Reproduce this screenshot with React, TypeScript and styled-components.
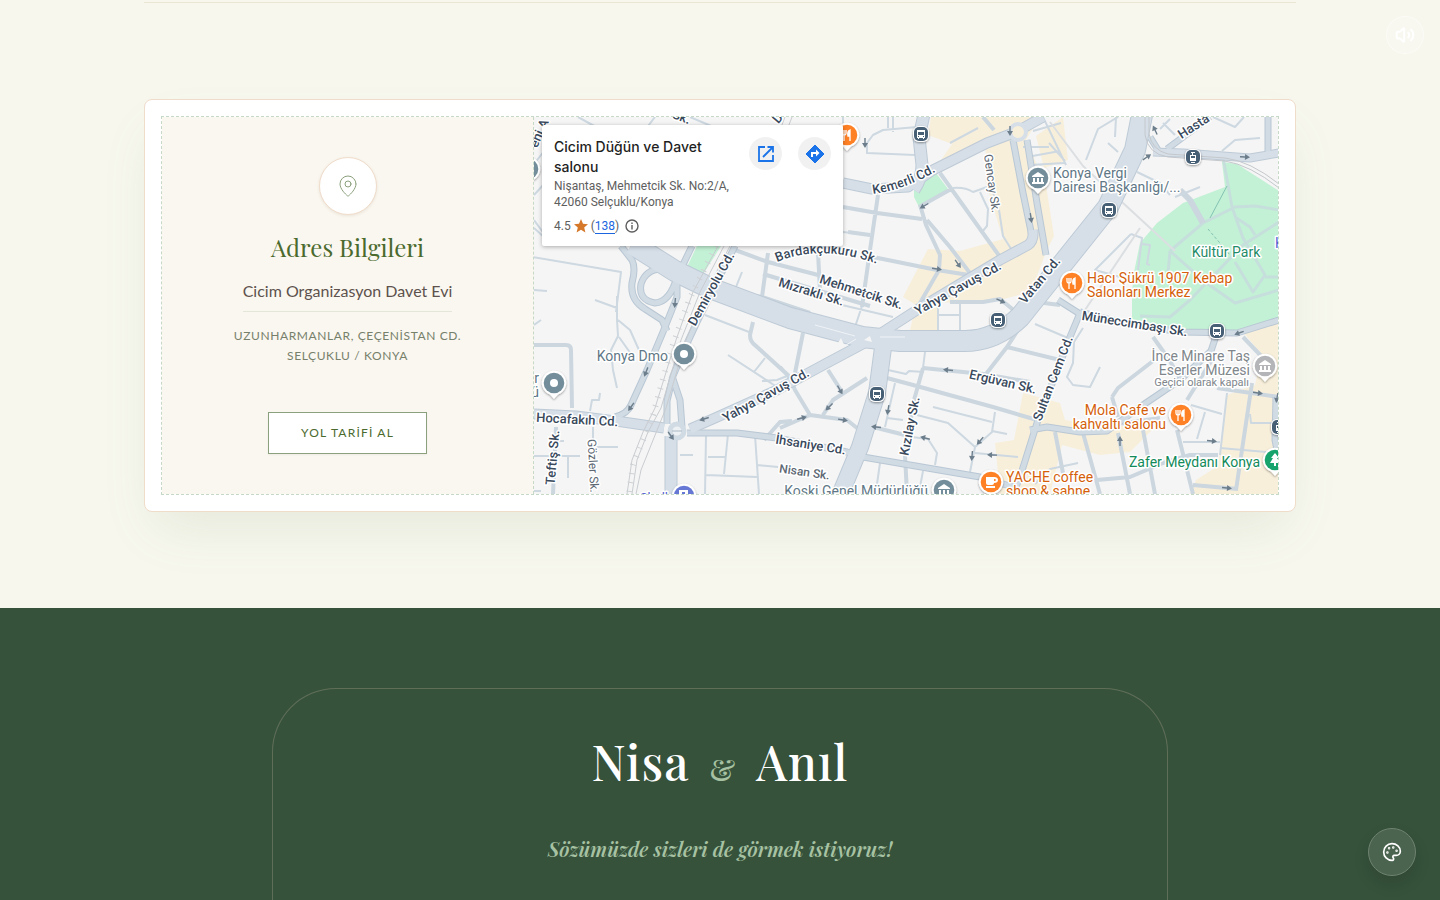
import React from "react";
import styled, { createGlobalStyle } from "styled-components";
import { MapPin, Palette, Volume2 } from "lucide-react";

const sans = `Lato, "Liberation Sans", sans-serif`;
const serif = `"Playfair Display", "Liberation Serif", serif`;

const GlobalStyle = createGlobalStyle`
  * { box-sizing: border-box; }
  body { margin: 0; font-family: ${sans}; background: #f7f7ee; overflow: hidden; }
  h2, h3, p { margin: 0; font-weight: 400; }
`;

const Page = styled.div`
  display: flex;
  flex-direction: column;
  height: 100vh;
  overflow: hidden;
`;

const VenueSection = styled.section`
  flex: none;
  padding: 2px 24px 96px;
`;

const Container = styled.div`
  max-width: 1152px;
  margin: 0 auto;
  padding-top: 96px;
  border-top: 1px solid #e9e6d3;
`;

const Card = styled.div`
  padding: 16px;
  background: #fff;
  border: 1px solid #f0dcca;
  border-radius: 8px;
  box-shadow: 0 25px 50px -12px rgba(120, 148, 100, 0.14);
`;

const CardInner = styled.div`
  display: grid;
  grid-template-columns: 1fr 2fr;
  border: 1px dashed #c6d9c6;
`;

const Address = styled.div`
  display: flex;
  flex-direction: column;
  align-items: center;
  padding: 40px 32px;
  text-align: center;
  background: #faf7f0;
  border-right: 1px dashed #c6d9c6;
`;

const PinBadge = styled.span`
  display: flex;
  align-items: center;
  justify-content: center;
  width: 58px;
  height: 58px;
  margin-bottom: 16px;
  color: #8ba07c;
  background: #fff;
  border: 1px solid #f0dcca;
  border-radius: 50%;
  box-shadow: 0 1px 3px rgba(120, 90, 50, 0.12);
`;

const AddressTitle = styled.h3`
  font: 400 24px/32px ${serif};
  color: #4b6a2e;
  margin-bottom: 16px;
`;

const VenueName = styled.p`
  font-size: 16px;
  line-height: 24px;
  color: #5d524d;
  padding-bottom: 8px;
  margin-bottom: 14px;
  border-bottom: 1px solid #e4e6da;
`;

const Street = styled.p`
  font-size: 12px;
  line-height: 20px;
  letter-spacing: 0.05em;
  color: #77806b;
  margin-bottom: 46px;
`;

const RouteButton = styled.button`
  height: 42px;
  padding: 0 32px;
  font: 400 12px/16px ${sans};
  letter-spacing: 0.1em;
  color: #4b6a2e;
  background: #fff;
  border: 1px solid #8ba07c;
  box-shadow: 0 1px 2px rgba(0, 0, 0, 0.05);
  cursor: pointer;
`;

const MapPane = styled.div`
  position: relative;
  min-width: 0;
  overflow: hidden;
  background: #f5f5f5;
`;

const MapDrawing = styled.svg`
  position: absolute;
  inset: 0;
  width: 100%;
  height: 100%;
`;

const PlaceCard = styled.div`
  position: absolute;
  top: 8px;
  left: 8px;
  display: flex;
  gap: 16px;
  width: 301px;
  height: 121px;
  padding: 12px;
  background: #fff;
  border-radius: 2px;
  box-shadow: 0 1px 4px rgba(0, 0, 0, 0.3);
  font-family: Inter, sans-serif;
`;

const PlaceInfo = styled.div`
  flex: 1;
  min-width: 0;
  color: #5e5e5e;
  font-size: 12px;
  line-height: 16px;
  white-space: nowrap;
`;

const PlaceName = styled.h3`
  font-size: 14px;
  line-height: 20px;
  font-weight: 500;
  color: #1f1f1f;
  margin-bottom: 1px;
`;

const PlaceAddress = styled.p`
  font-family: Roboto, sans-serif;
`;

const Rating = styled.div`
  display: flex;
  align-items: center;
  gap: 3px;
  margin-top: 8px;
  font-family: Roboto, sans-serif;
  svg { flex: none; }
`;

const Reviews = styled.a`
  color: #1a66e0;
  text-decoration: none;
  border-bottom: 1px solid #1a66e0;
`;

const RoundLink = styled.a`
  flex: none;
  display: flex;
  align-items: center;
  justify-content: center;
  width: 33px;
  height: 33px;
  border-radius: 50%;
  background: #f1f1f1;
`;

const Closing = styled.footer`
  flex: 1;
  display: flex;
  justify-content: center;
  min-height: 292px;
  padding: 80px 24px 0;
  background: #36523b;
`;

const Arch = styled.div`
  width: 100%;
  max-width: 896px;
  padding: 40px 24px 0;
  text-align: center;
  border: 1px solid rgba(214, 190, 170, 0.26);
  border-bottom: 0;
  border-radius: 64px 64px 0 0;
`;

const Names = styled.h2`
  display: flex;
  justify-content: center;
  align-items: baseline;
  gap: 20px;
  font: 500 48px/64px ${serif};
  letter-spacing: 1px;
  color: #fff;
  margin-bottom: 32px;
`;

const Ampersand = styled.span`
  font-size: 30px;
  color: #a7c2a3;
`;

const Invite = styled.p`
  font: italic 600 20px/32px ${serif};
  color: #a7c2a3;
`;

const SoundButton = styled.button`
  position: fixed;
  top: 16px;
  right: 16px;
  display: flex;
  align-items: center;
  justify-content: center;
  width: 38px;
  height: 38px;
  padding: 0;
  color: #fff;
  background: rgba(255, 255, 255, 0.12);
  border: 1px solid rgba(255, 255, 255, 0.5);
  border-radius: 50%;
`;

const ThemeButton = styled.button`
  position: fixed;
  right: 24px;
  bottom: 24px;
  display: flex;
  align-items: center;
  justify-content: center;
  width: 48px;
  height: 48px;
  padding: 0;
  color: #fff;
  background: #4b644f;
  border: 1px solid #6e8371;
  border-radius: 50%;
  box-shadow: 0 8px 16px rgba(0, 0, 0, 0.12);
`;

const parks = [
  "M1222 162L1237 164L1262 180L1279 191V318L1243 332L1190 333L1132 321L1132 300L1133 277L1140 243L1157 223L1183 203L1225 187Z",
  "M914 189L936 173L948 189L919 207L914 197Z",
  "M697 246L721 246L700 279L685 271Z",
];

const districts = [
  "M931 117H1040L1026 140L1046 185L1054 236L1046 252L1031 292L1000 300L975 304L940 302L937 331L910 330L916 305L903 297L928 249L960 251L1003 239L985 180L986 141L941 160L952 144L928 135Z",
  "M1036 136L1063 117L1068 160L1044 168Z",
  "M1023 393L1060 403L1065 420L1110 427L1160 422L1130 452L1100 455L1062 445L1050 494H1000L995 443L1014 440Z",
  "M1243 332L1279 320V494H1190L1196 480L1218 466L1227 395L1255 385L1262 355Z",
];

const minorRoads = [
  "M578 117L598 128M655 117L645 130M690 117L716 128M534 164L545 150M534 195L545 183M534 220L545 235M534 228L545 238",
  "M533 257L621 272L616 312M595 300L617 308M533 290L547 291M742 272L734 292M534 325L541 320",
  "M617 296V320L618 336L611 350L613 370L617 388M618 320L630 330L639 350M619 337L631 354",
  "M590 411L592 400H599L600 393M593 427V440M533 456H580M596 447H618M568 457V478M556 441H564M533 491H541",
  "M680 455H693M706 435L705 494M728 434L724 474M706 475L757 477M708 457H725M755 435L759 494M757 465L778 467",
  "M705 315L749 332M728 355L777 387M765 358L754 372M762 381L777 380L787 376",
  "M842 305L893 317M863 303L855 327M938 305V330M960 304V331M938 315H960",
  "M925 352L923 368M888 370L906 374L909 371L924 372M895 383L885 427M887 418L903 420M917 415L948 423L975 447L970 472M933 407L992 422M995 412L992 432L975 447M992 431L1007 434M975 453L1018 457M880 463L877 484M923 471L920 487",
  "M903 436L928 439L937 453L935 465",
  "M843 144V117M867 154L867 143L873 135L883 130L917 127M867 153L915 155M893 117V132M888 117V128M950 143L978 128M843 232L870 235",
  "M953 188Q965 187 973 192L987 187M980 192L988 209L987 226L982 232M987 154L991 187L999 210L1003 236L1013 252",
  "M1023 147H1049M1027 157L1060 151M1030 165L1064 163M1043 117L1066 165M1049 143L1065 161M1033 131L1061 123",
  "M1086 160L1098 129L1118 117M1116 117L1115 137M1163 123L1175 135M1160 129L1170 119M1222 151L1235 140L1260 138M1213 117L1235 127L1244 117M1118 152L1108 143",
  "M1137 172L1160 183L1170 195M1175 197L1200 187M1131 234L1142 238L1138 270M1131 234L1095 270L1131 280M1142 244L1150 245L1147 264L1150 265",
  "M1083 328L1074 342L1073 363L1067 377L1073 385L1090 387L1100 367M1035 324L1075 341M1191 405L1222 414M1205 412L1197 439M1183 442H1220M1227 393L1220 455M1220 448L1279 453M1250 414L1251 423H1279M1035 484L1050 469L1078 463",
];

const streets = [
  "M534 345H566Q571 345 571 350L572 408M556 427L553 494M753 322L750 335Q750 342 756 346L789 376M764 440L780 422L792 421",
  "M763 274L830 294L870 306M768 253L762 297M818 253L820 290M735 250L768 262L822 276",
  "M705 288L762 297L810 313M740 300L790 310",
  "M803 333L795 373M780 367L790 378L795 390L810 415M780 428L810 415L847 420L857 428M823 415L833 400L867 378M828 370L842 392",
  "M923 368L983 374L1030 382M923 368L914 400L905 455L907 494M887 378L913 385L993 407L1037 420M873 427L905 435",
  "M1007 347L986 374M1020 327L1007 347L1060 360",
  "M843 207L877 213L922 219M878 195L870 250L862 307M848 232L870 235M873 257L937 270L969 275M927 220L950 247L973 277M940 173L1000 257M919 207L953 188M920 205L926 225L940 255L939 270L920 303",
  "M950 302H983L1000 299L1016 312M983 117L994 130M1020 300L1060 305",
  "M1153 337L1168 358L1183 383M1112 397L1118 388L1153 361M1187 400L1202 376L1213 358M1243 337L1265 360M1112 397L1118 417",
  "M1055 432L1063 473M1083 433L1100 494M1118 433L1130 494M1143 430L1155 494M1177 430L1182 450L1193 494M1097 480L1130 477L1163 463L1190 455H1218M1193 485L1238 489M1252 383L1236 490M1217 388L1279 397M1118 424L1160 418",
];

const parkPaths =
  "M1223 157L1232 207L1243 238L1265 275L1253 292L1235 262M1170 251L1203 223L1235 207L1255 206L1279 210M1170 251L1205 282L1235 303L1279 290M1170 251L1168 273M1235 217L1250 227L1255 235M1243 245L1279 222M1243 245L1190 300L1170 317L1140 316M1265 277H1279";

const avenues = [
  "M621 246L632 260Q636 268 632 283Q630 300 645 309L662 320L667 331",
  "M692 246L677 277Q670 302 655 303Q638 300 641 284Q646 268 664 269L675 272",
  "M677 277V297L663 332L647 370L631 405Q627 414 615 417",
  "M735 246L724 268L697 322L684 350L673 376L667 401V424",
  "M672 376L680 400L682 427M1080 313L1070 337L1037 423L1020 477L1013 494M1058 300L1080 314",
  "M1030 430L1047 427L1080 432L1107 431L1140 407L1180 380L1211 351L1217 333",
  "M1080 312L1130 325L1183 332L1237 333L1279 320",
  "M687 433L737 433L777 438L847 452L863 457L980 477L1013 487",
  "M1027 140L1037 203L1046 255M1013 140L1023 193L1033 241M1276 397L1275 440L1279 460M1268 117V153M1167 149L1210 117M1150 137L1158 150",
];

const wideRoads = [
  "M534 414L576 416L623 422L664 428",
  "M690 429L715 418L775 391L827 363L872 339L920 308L1000 260L1028 245Q1034 241 1033 230",
  "M843 183L872 189L908 187L933 170L987 143L1016 132L1043 117",
];

const boulevard = "M632 244L675 271L710 288L790 318L862 337L900 341H965Q995 341 1020 317L1052 277L1108 207L1135 150L1143 110";
const southRoad = "M884 340L877 393L860 447L838 500";
const sideRoads = "M925 110L919 137L922 165Q922 178 914 190M671 436V500";
const stationRoad = "M1153 152L1183 153L1250 158L1279 153";

type LabelProps = {
  x: number;
  y: number;
  children: React.ReactNode;
  turn?: number;
  size?: number;
  fill?: string;
  anchor?: "start" | "middle" | "end";
  bold?: boolean;
};

const MapText = styled.text`
  font-family: Roboto, sans-serif;
  paint-order: stroke;
  stroke: #fff;
  stroke-width: 3px;
  stroke-linejoin: round;
`;

const Label = ({ x, y, children, turn = 0, size = 13, fill = "#39495c", anchor = "middle", bold = true }: LabelProps) => (
  <MapText x={x} y={y} fontSize={size} fontWeight={bold ? 500 : 400} fill={fill} textAnchor={anchor}
    transform={turn ? `rotate(${turn} ${x} ${y})` : undefined}>{children}</MapText>
);

const Fork = () => (
  <g fill="none" stroke="#fff" strokeWidth="1.3">
    <path d="M-5 -5V-2Q-5 0 -3 0T-1 -2V-5M-3 -5V6" />
    <path d="M3 6V-5Q0 -4 1 1H3" fill="#fff" />
  </g>
);
const Museum = () => <path d="M-6 -2L0 -6L6 -2V-1H-6ZM-5 0H-3V4H-5ZM-1 0H1V4H-1ZM3 0H5V4H3ZM-6 4H6V6H-6Z" fill="#fff" />;
const Dot = () => <circle r="4" fill="#fff" />;
const Cup = () => <path d="M-5 -5H3Q7 -5 7 -2T3 1Q3 3 1 3H-3Q-5 3 -5 1ZM3 -3V-1Q5 -1 5 -2T3 -3ZM-5 4H4V6H-5Z" fill="#fff" />;
const Tree = () => <path d="M0 -7L4 -2H2L5 3H1V6H-1V3H-5L-2 -2H-4Z" fill="#fff" />;

const Pin = ({ x, y, fill, children }: { x: number; y: number; fill: string; children: React.ReactNode }) => (
  <g transform={`translate(${x} ${y})`} filter="url(#pinShadow)">
    <path d="M0 16L-4 11.5A12.2 12.2 0 1 1 4 11.5Z" fill="#fff" />
    <circle r="10.3" fill={fill} />
    {children}
  </g>
);

const Stop = ({ x, y, tram }: { x: number; y: number; tram?: boolean }) => (
  <g transform={`translate(${x} ${y})`} filter="url(#pinShadow)">
    <rect x="-8" y="-8" width="16" height="16" rx="6" fill="#fff" />
    <rect x="-7" y="-7" width="14" height="14" rx="5" fill="#475f75" />
    {tram
      ? <path d="M-3 -2H3V4H-3ZM-2 -5H2V-4H0V-2H-1V-4H-2ZM-2 5H2V6H-2Z" fill="#fff" />
      : <path d="M-4 -4H4V4H3V5H2V4H-2V5H-3V4H-4Z" fill="#fff" />}
    <path d={tram ? "M-2 -1H2V1H-2Z" : "M-3 -2H3V1H-3ZM-3 2H-2V3H-3ZM2 2H3V3H2Z"} fill="#475f75" />
  </g>
);

const arrows: [number, number, number][] = [
  [865, 143, 90], [924, 206, 150], [1010, 131, 90], [1031, 218, 82], [937, 269, 8], [958, 264, 55], [1001, 301, 25],
  [675, 303, 95], [646, 372, 112], [631, 407, 125], [704, 419, 163], [671, 436, 55], [840, 390, 60], [829, 407, 135],
  [802, 418, -15], [843, 420, 10], [888, 410, 100], [876, 427, 185], [925, 438, 195], [948, 370, 185], [980, 441, 130],
  [972, 456, 95], [992, 455, 182], [1155, 130, 245], [1147, 157, -35], [1245, 157, 3], [1239, 333, 160], [1258, 393, 8],
  [1277, 398, 100], [1120, 441, -90], [1212, 441, 5], [1227, 488, 5],
];

const gray = "#5f7786";
const orange = "#d55f0a";

const VenueMap = () => (
  <MapDrawing viewBox="534 117 744 377" preserveAspectRatio="xMidYMid slice" role="img" aria-label="Selçuklu, Konya">
    <defs>
      <filter id="pinShadow" x="-40%" y="-40%" width="180%" height="180%">
        <feDropShadow dx="0" dy="1" stdDeviation="1" floodOpacity="0.4" />
      </filter>
      <path id="kemerli" d="M873 194Q905 190 940 169" />
      <path id="bardakcu" d="M777 262Q822 243 880 265" />
    </defs>
    {districts.map((d) => <path key={d} d={d} fill="#f8efdb" />)}
    {parks.map((d) => <path key={d} d={d} fill="#c3f1d5" />)}
    <g fill="none" strokeLinejoin="round">
      <path d={parkPaths} stroke="#c6dfdc" strokeWidth="3" />
      <path d="M1180 190L1190 200L1203 223" stroke="#cbd6df" strokeWidth="6" />
      <path d={minorRoads.join("")} stroke="#cdd8e1" strokeWidth="2" />
      <path d={streets.join("")} stroke="#cbd6df" strokeWidth="4" />
      <path d="M1050 122L1083 166L1175 251M1140 228L1085 310" stroke="#dcdfe2" strokeWidth="2" />
      <path d="M1227 186L1210 218" stroke="#84c3b3" strokeWidth="1" />
      <path d="M1208 229L1230 255" stroke="#84c3b3" strokeWidth="1" strokeDasharray="3 2" />
      <path d={avenues.join("")} stroke="#b9c7d4" strokeWidth="7" />
      <path d={wideRoads.join("")} stroke="#bdcad6" strokeWidth="11" />
      <path d={stationRoad} stroke="#bdcad6" strokeWidth="9" />
      <path d={boulevard} stroke="#bdcad6" strokeWidth="22" />
      <path d={southRoad} stroke="#bdcad6" strokeWidth="18" />
      <path d={sideRoads} stroke="#bdcad6" strokeWidth="13" />
      <path d={avenues.join("")} stroke="#d0dbe4" strokeWidth="5" />
      <path d={wideRoads.join("")} stroke="#d6dfe8" strokeWidth="9" />
      <path d={stationRoad} stroke="#d6dfe8" strokeWidth="7" />
      <path d={boulevard} stroke="#d6dfe8" strokeWidth="20" />
      <path d={southRoad} stroke="#d6dfe8" strokeWidth="16" />
      <path d={sideRoads} stroke="#d6dfe8" strokeWidth="11" />
      <path d="M838 343L845 347L841 338ZM864 340L870 336L872 342Z" fill="#f5f5f5" />
      <path d="M815 325L855 336M880 337H905M846 345L856 339" stroke="#f0f3f6" strokeWidth="1" />
      <circle cx="1018" cy="132" r="8" fill="#f8efdb" stroke="#d6dfe8" strokeWidth="4" />
      <circle cx="677" cy="431" r="7" fill="#eef1f3" stroke="#d0dbe4" strokeWidth="5" />
      <path d="M672 431H682" stroke="#a9b8c4" strokeWidth="1" />
      <path d="M718 246L693 292L676 340L655 408L643 432L632 460L627 494M724 246L700 292L681 340L661 408L648 432L637 460L632 494M730 246L706 292L686 340L666 408L641 470L636 494M785 117L780 130M792 117L787 130" stroke="#c9ccd0" strokeWidth="1" />
      <path d="M716 246L689 300L671 350L653 415L633 465L629 494" stroke="#cfd2d5" strokeWidth="6" strokeDasharray="1 8" />
      <path d="M1145 117V135Q1148 154 1168 157L1225 161Q1250 165 1279 188M1149 117V134Q1152 150 1168 154L1225 158Q1250 161 1279 184" stroke="#c4c8cc" strokeWidth="1" />
    </g>
    {arrows.map(([x, y, a]) => (
      <path key={`${x}-${y}`} d="M-5 -.7H0V-3L5 0L0 3V.7H-5Z" fill="#6c7d8b" transform={`translate(${x} ${y}) rotate(${a})`} />
    ))}

    <MapText fontSize="13" fontWeight="500" fill="#39495c"><textPath href="#kemerli">Kemerli Cd.</textPath></MapText>
    <MapText fontSize="13" fontWeight="500" fill="#39495c"><textPath href="#bardakcu">Bardakçukuru Sk.</textPath></MapText>
    <Label x={543} y={135} turn={-66}>eni A</Label>
    <Label x={680} y={121} turn={20}>Sk.</Label>
    <Label x={781} y={121} turn={-50}>D</Label>
    <Label x={1196} y={130} turn={-33}>Hasta</Label>
    <Label x={988} y={184} turn={82} size={12} bold={false} fill="#5d6873">Gencay Sk.</Label>
    <Label x={810} y={296} turn={17}>Mızraklı Sk.</Label>
    <Label x={860} y={296} turn={18}>Mehmetcik Sk.</Label>
    <Label x={960} y={292} turn={-29}>Yahya Çavuş Cd.</Label>
    <Label x={768} y={399} turn={-29}>Yahya Çavuş Cd.</Label>
    <Label x={715} y={291} turn={-61}>Demiryolu Cd.</Label>
    <Label x={1043} y={283} turn={-50}>Vatan Cd.</Label>
    <Label x={1134} y={328} turn={9}>Müneccimbaşı Sk.</Label>
    <Label x={1057} y={380} turn={-69}>Sultan Cem Cd.</Label>
    <Label x={1002} y={386} turn={13}>Ergüvan Sk.</Label>
    <Label x={914} y={427} turn={-79}>Kızılay Sk.</Label>
    <Label x={577} y={424} turn={3}>Hocafakıh Cd.</Label>
    <Label x={557} y={458} turn={-85}>Teftiş Sk.</Label>
    <Label x={589} y={466} turn={87} size={12} bold={false} fill="#5d6873">Gözler Sk.</Label>
    <Label x={810} y={449} turn={9}>İhsaniye Cd.</Label>
    <Label x={804} y={476} turn={8} size={12} fill="#5d6873">Nisan Sk.</Label>

    <Label x={668} y={361} size={14} bold={false} fill={gray} anchor="end">Konya Dmo</Label>
    <Label x={539} y={383} size={14} bold={false} fill={gray} anchor="end">r</Label>
    <Label x={539} y={397} size={14} bold={false} fill={gray} anchor="end">ü</Label>
    <Label x={1053} y={178} size={14} bold={false} fill={gray} anchor="start">Konya Vergi</Label>
    <Label x={1053} y={192} size={14} bold={false} fill={gray} anchor="start">Dairesi Başkanlığı/...</Label>
    <Label x={1226} y={257} size={14} bold={false} fill="#1f8c68">Kültür Park</Label>
    <Label x={1275} y={248} size={14} bold={false} fill="#5260d3" anchor="start">K</Label>
    <Label x={1087} y={283} size={14} bold={false} fill={orange} anchor="start">Hacı Şükrü 1907 Kebap</Label>
    <Label x={1087} y={297} size={14} bold={false} fill={orange} anchor="start">Salonları Merkez</Label>
    <Label x={1250} y={361} size={14} bold={false} fill="#80868b" anchor="end">İnce Minare Taş</Label>
    <Label x={1250} y={375} size={14} bold={false} fill="#80868b" anchor="end">Eserler Müzesi</Label>
    <Label x={1249} y={386} size={11} bold={false} fill="#80868b" anchor="end">Geçici olarak kapalı</Label>
    <Label x={1166} y={415} size={14} bold={false} fill={orange} anchor="end">Mola Cafe ve</Label>
    <Label x={1166} y={429} size={14} bold={false} fill={orange} anchor="end">kahvaltı salonu</Label>
    <Label x={1260} y={467} size={14} bold={false} fill="#128a5a" anchor="end">Zafer Meydanı Konya</Label>
    <Label x={1006} y={482} size={14} bold={false} fill={orange} anchor="start">YACHE coffee</Label>
    <Label x={1006} y={496} size={14} bold={false} fill={orange} anchor="start">shop &amp; sahne</Label>
    <Label x={928} y={496} size={14} bold={false} fill={gray} anchor="end">Koski Genel Müdürlüğü</Label>
    <Label x={668} y={502} size={13} bold={false} fill="#5260d3" anchor="end">Shell</Label>

    <Pin x={528} y={169} fill="#738e9a"><Dot /></Pin>
    <Pin x={554} y={383} fill="#738e9a"><Dot /></Pin>
    <Pin x={684} y={354} fill="#738e9a"><Dot /></Pin>
    <Pin x={1038} y={178} fill="#738e9a"><Museum /></Pin>
    <Pin x={944} y={490} fill="#738e9a"><Museum /></Pin>
    <Pin x={1265} y={366} fill="#b3b5b8"><Museum /></Pin>
    <Pin x={847} y={135} fill="#ff8126"><Fork /></Pin>
    <Pin x={1072} y={283} fill="#ff8126"><Fork /></Pin>
    <Pin x={1181} y={415} fill="#ff8126"><Fork /></Pin>
    <Pin x={991} y={482} fill="#ff8126"><Cup /></Pin>
    <Pin x={1275} y={460} fill="#18a46c"><Tree /></Pin>
    <Pin x={684} y={496} fill="#6678d4"><path d="M-5 -6H4V4H-5ZM-2 -4V0H1V-4Z" fill="#fff" fillRule="evenodd" /></Pin>
    <Stop x={921} y={134} />
    <Stop x={1193} y={157} tram />
    <Stop x={1109} y={210} />
    <Stop x={998} y={320} />
    <Stop x={877} y={394} />
    <Stop x={1217} y={331} />
    <Stop x={1279} y={427} tram />
  </MapDrawing>
);

export default function App() {
  return (
    <>
      <GlobalStyle />
      <Page>
        <VenueSection>
          <Container>
            <Card>
              <CardInner>
                <Address>
                  <PinBadge><MapPin size={24} strokeWidth={1} /></PinBadge>
                  <AddressTitle>Adres Bilgileri</AddressTitle>
                  <VenueName>Cicim Organizasyon Davet Evi</VenueName>
                  <Street>UZUNHARMANLAR, ÇEÇENİSTAN CD.<br />SELÇUKLU / KONYA</Street>
                  <RouteButton type="button">YOL TARİFİ AL</RouteButton>
                </Address>
                <MapPane>
                  <VenueMap />
                  <PlaceCard>
                    <PlaceInfo>
                      <PlaceName>Cicim Düğün ve Davet<br />salonu</PlaceName>
                      <PlaceAddress>Nişantaş, Mehmetcik Sk. No:2/A,<br />42060 Selçuklu/Konya</PlaceAddress>
                      <Rating>
                        <span>4.5</span>
                        <svg width="14" height="14" viewBox="0 0 14 14"><path d="M7 0L9 4.8L14 5.2L10.2 8.5L11.4 13.4L7 10.8L2.6 13.4L3.8 8.5L0 5.2L5 4.8Z" fill="#d5782a" /></svg>
                        <span>(<Reviews href="#yorumlar">138</Reviews>)</span>
                        <svg width="20" height="16" viewBox="0 0 20 16" fill="none" stroke="#5e5e5e" strokeWidth="1.4"><circle cx="10" cy="8" r="6" /><path d="M10 7V11.5M10 4.5V6" /></svg>
                      </Rating>
                    </PlaceInfo>
                    <RoundLink href="#harita" aria-label="Haritayı aç">
                      <svg width="18" height="18" viewBox="0 0 18 18" fill="none" stroke="#1a73e8" strokeWidth="1.8"><path d="M8 2H2V16H16V10M10.500 2H16V7.500M16 2L6 12" /></svg>
                    </RoundLink>
                    <RoundLink href="#yol" aria-label="Yol tarifi">
                      <svg width="20" height="20" viewBox="0 0 20 20"><path d="M10 1L19 10L10 19L1 10Z" fill="#1a73e8" stroke="#1a73e8" strokeLinejoin="round" /><path d="M7 13V9H12" fill="none" stroke="#fff" strokeWidth="2" /><path d="M11 5.500L14.500 9L11 12.500Z" fill="#fff" /></svg>
                    </RoundLink>
                  </PlaceCard>
                </MapPane>
              </CardInner>
            </Card>
          </Container>
        </VenueSection>
        <Closing>
          <Arch>
            <Names><span>Nisa</span><Ampersand>&amp;</Ampersand><span>Anıl</span></Names>
            <Invite>Sözümüzde sizleri de görmek istiyoruz!</Invite>
          </Arch>
        </Closing>
      </Page>
      <SoundButton type="button" aria-label="Müzik"><Volume2 size={20} strokeWidth={2.5} /></SoundButton>
      <ThemeButton type="button" aria-label="Tema"><Palette size={20} /></ThemeButton>
    </>
  );
}
